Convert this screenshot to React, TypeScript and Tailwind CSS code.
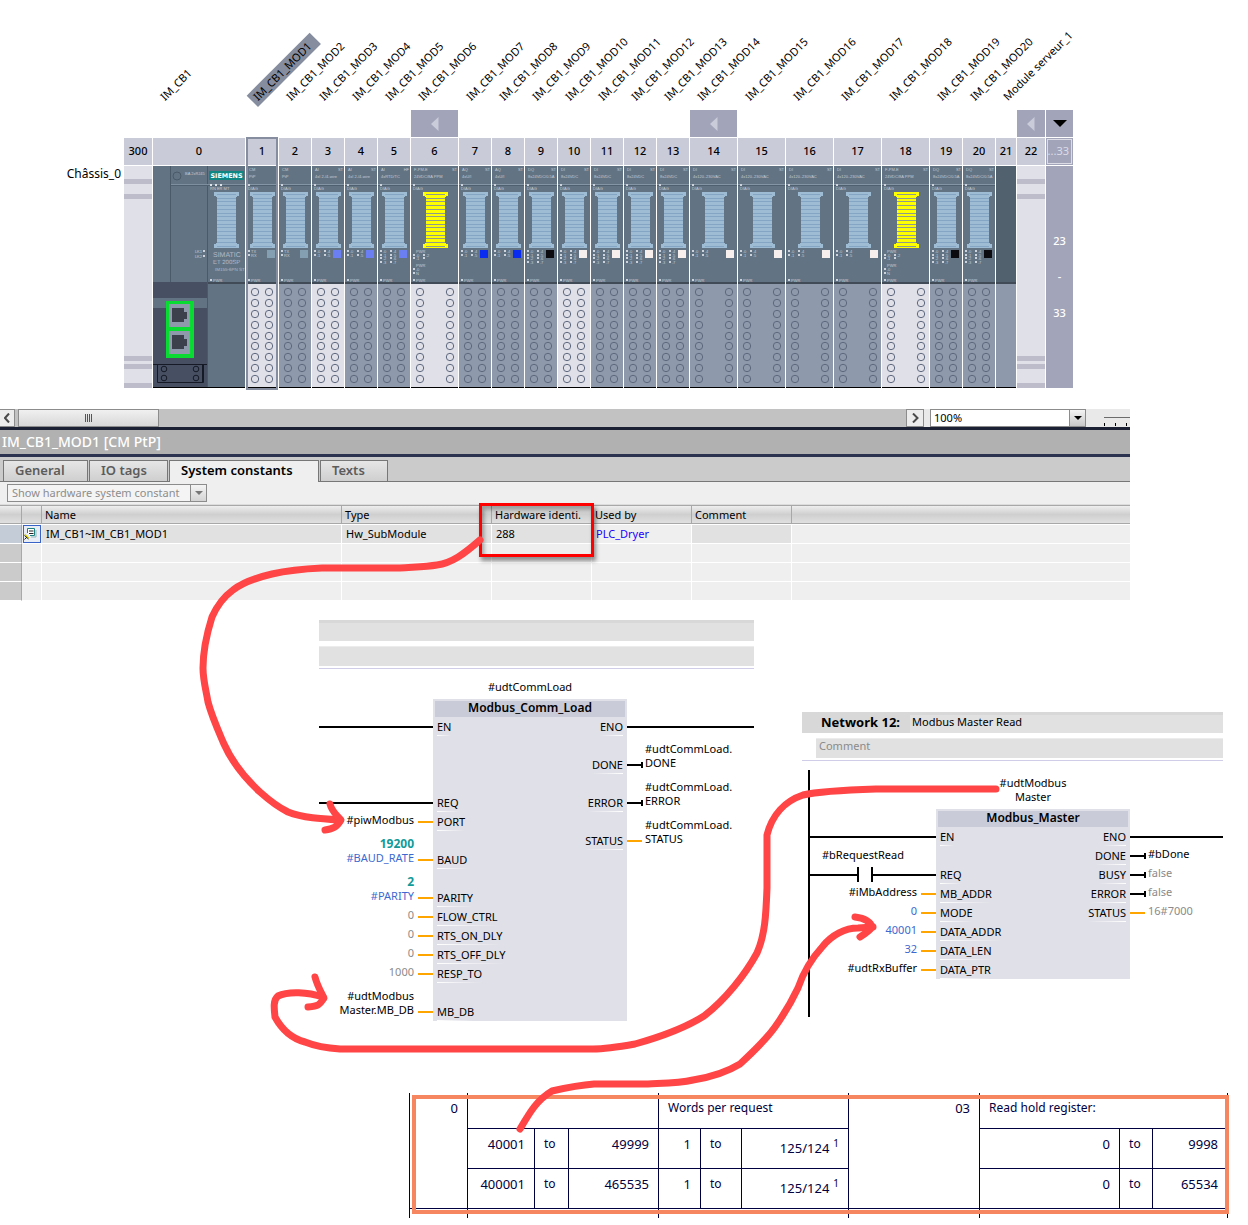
import React from "react";

type Slot = {
  no: string;
  label?: string;
  kind: "rail" | "head" | "module" | "server";
  wide?: boolean;
  light?: boolean;
  spool?: string;
  square?: string;
  leds?: "pair" | "quad" | "oct" | "power";
  family?: string;
  variant?: string;
  model?: string;
  arrow?: boolean;
  selected?: boolean;
};

const slots: Slot[] = [
  { no: "300", kind: "rail" },
  { no: "0", kind: "head", label: "IM_CB1" },
  { no: "1", kind: "module", label: "IM_CB1_MOD1", light: true, square: "#839fb1", leds: "pair", family: "CM", model: "PtP", selected: true },
  { no: "2", kind: "module", label: "IM_CB1_MOD2", square: "#839fb1", leds: "pair", family: "CM", model: "PtP" },
  { no: "3", kind: "module", label: "IM_CB1_MOD3", light: true, square: "#6c7ff2", leds: "quad", family: "AI", variant: "ST", model: "4xI 2-/4-wire" },
  { no: "4", kind: "module", label: "IM_CB1_MOD4", square: "#6c7ff2", leds: "quad", family: "AI", variant: "ST", model: "4xI 2-/4-wire" },
  { no: "5", kind: "module", label: "IM_CB1_MOD5", square: "#6c7ff2", leds: "oct", family: "AI", variant: "HF", model: "4xRTD/TC" },
  { no: "6", kind: "module", label: "IM_CB1_MOD6", wide: true, light: true, spool: "yellow", leds: "power", family: "F-PM-E", variant: "ST", model: "24VDC/8A PPM", arrow: true },
  { no: "7", kind: "module", label: "IM_CB1_MOD7", square: "#0a2cf0", leds: "quad", family: "AQ", variant: "ST", model: "4xU/I" },
  { no: "8", kind: "module", label: "IM_CB1_MOD8", square: "#0a2cf0", leds: "quad", family: "AQ", variant: "ST", model: "4xU/I" },
  { no: "9", kind: "module", label: "IM_CB1_MOD9", square: "#0c0c10", leds: "oct", family: "DQ", variant: "ST", model: "8x24VDC/0.5A" },
  { no: "10", kind: "module", label: "IM_CB1_MOD10", light: true, square: "#f7eeee", leds: "oct", family: "DI", variant: "ST", model: "8x24VDC" },
  { no: "11", kind: "module", label: "IM_CB1_MOD11", square: "#f7eeee", leds: "oct", family: "DI", variant: "ST", model: "8x24VDC" },
  { no: "12", kind: "module", label: "IM_CB1_MOD12", square: "#f7eeee", leds: "oct", family: "DI", variant: "ST", model: "8x24VDC" },
  { no: "13", kind: "module", label: "IM_CB1_MOD13", square: "#f7eeee", leds: "oct", family: "DI", variant: "ST", model: "8x24VDC" },
  { no: "14", kind: "module", label: "IM_CB1_MOD14", wide: true, square: "#f7eeee", leds: "quad", family: "DI", variant: "ST", model: "4x120..230VAC", arrow: true },
  { no: "15", kind: "module", label: "IM_CB1_MOD15", wide: true, square: "#f7eeee", leds: "quad", family: "DI", variant: "ST", model: "4x120..230VAC" },
  { no: "16", kind: "module", label: "IM_CB1_MOD16", wide: true, square: "#f7eeee", leds: "quad", family: "DI", variant: "ST", model: "4x120..230VAC" },
  { no: "17", kind: "module", label: "IM_CB1_MOD17", wide: true, square: "#f7eeee", leds: "quad", family: "DI", variant: "ST", model: "4x120..230VAC" },
  { no: "18", kind: "module", label: "IM_CB1_MOD18", wide: true, light: true, spool: "yellow", leds: "power", family: "F-PM-E", variant: "ST", model: "24VDC/8A PPM" },
  { no: "19", kind: "module", label: "IM_CB1_MOD19", square: "#0c0c10", leds: "oct", family: "DQ", variant: "ST", model: "8x24VDC/0.5A" },
  { no: "20", kind: "module", label: "IM_CB1_MOD20", square: "#0c0c10", leds: "oct", family: "DQ", variant: "ST", model: "8x24VDC/0.5A" },
  { no: "21", kind: "server", label: "Module serveur_1" },
  { no: "22", kind: "rail", arrow: true },
];

const BODY = "#627484";
const TERMINAL_ROWS = [126, 137, 148, 159, 170, 180, 191, 202, 213];

function Tiny({ x, y, children, end, size = 4 }: { x: number; y: number; children: React.ReactNode; end?: boolean; size?: number }) {
  return (
    <text x={x} y={y} fontSize={size} fill="#c3cad4" textAnchor={end ? "end" : "start"} fontFamily="Liberation Sans, sans-serif">
      {children}
    </text>
  );
}

function Spool({ x, yellow }: { x: number; yellow?: boolean }) {
  const fill = yellow ? "#ffff00" : "#9fbcd5";
  return (
    <g shapeRendering="crispEdges">
      <path
        fill={fill}
        d={`M${x} 26h25v4h-2v1h-1v46h1v1h2v4h-25v-4h2v-1h1v-46h-1v-1h-2z`}
      />
      {Array.from({ length: 15 }, (_, i) => (
        <rect key={i} x={x + 3} y={28 + Math.round(i * 3.7)} width={19} height={1} fill={yellow ? "#8f9c8c" : "#84a6c4"} />
      ))}
    </g>
  );
}

function Led({ x, y, text }: { x: number; y: number; text?: string }) {
  return (
    <g>
      <rect x={x} y={y} width={2} height={2} fill="#cdd3db" />
      {text && <Tiny x={x + 3} y={y + 3}>{text}</Tiny>}
    </g>
  );
}

function Leds({ kind }: { kind: Slot["leds"] }) {
  if (kind === "pair")
    return (
      <>
        <Led x={2} y={84} text="TX" />
        <Led x={2} y={88} text="RX" />
      </>
    );
  if (kind === "power")
    return (
      <>
        <Tiny x={5} y={87}>PWR</Tiny>
        {[88, 91].map((y, i) => (
          <g key={y}>
            <Led x={2} y={y} text={"." + i} />
            <Led x={12} y={y} text={i ? "" : ".2"} />
          </g>
        ))}
        <Tiny x={5} y={101}>PWR</Tiny>
        <Led x={2} y={102} text=".0" />
        <Led x={2} y={106} text="N" />
      </>
    );
  const rows = kind === "quad" ? [84, 88] : [84, 88, 91, 95];
  return (
    <>
      {rows.map((y, i) => (
        <g key={y}>
          <Led x={2} y={y} text={"." + i} />
          <Led x={12} y={y} text={"." + (i + 4)} />
        </g>
      ))}
    </>
  );
}

function ModuleBody({ slot }: { slot: Slot }) {
  const w = slot.wide ? 47 : 32;
  const right = slot.wide ? 39 : 23;
  return (
    <svg className="block" width={w} height={222} viewBox={`0 0 ${w} 222`} aria-hidden="true">
      <rect width={w} height={222} fill={BODY} />
      <rect y={18} width={w} height={1} fill="#8496a5" />
      <rect y={19} width={w} height={1} fill="#4f6070" />
      <Tiny x={3} y={5}>{slot.family}</Tiny>
      <Tiny x={w - 1} y={5} end>{slot.variant}</Tiny>
      <Tiny x={3} y={12}>{slot.model}</Tiny>
      <Led x={2} y={18} />
      <Tiny x={2} y={24}>DIAG</Tiny>
      <Spool x={slot.wide ? 12 : 4} yellow={slot.spool === "yellow"} />
      <Leds kind={slot.leds} />
      {slot.square && <rect x={slot.wide ? 36 : 21} y={84} width={8} height={8} fill={slot.square} />}
      <Led x={2} y={113} text="PWR" />
      <rect y={116} width={w} height={2} fill="#414b57" />
      <rect y={118} width={w} height={103} fill={slot.light ? "#e0e0e8" : "#8f99ac"} />
      <rect y={221} width={w} height={1} fill="#000" />
      {TERMINAL_ROWS.map((y) => (
        <g key={y} fill="none" stroke="#5d687d">
          <circle cx={9} cy={y} r={3.7} />
          <circle cx={right} cy={y} r={3.7} />
        </g>
      ))}
    </svg>
  );
}

function HeadBody() {
  return (
    <svg className="block" width={92} height={222} viewBox="0 0 92 222" aria-hidden="true">
      <rect width={92} height={222} fill={BODY} />
      <rect x={17} y={0} width={1} height={116} fill="#4b5a69" />
      <rect x={54} y={0} width={1} height={222} fill="#4b5a69" />
      <rect x={18} y={18} width={74} height={1} fill="#7e909f" />
      <rect x={18} y={19} width={74} height={1} fill="#4f6070" />
      <circle cx={24} cy={10} r={4} fill="none" stroke="#4b5a69" />
      <Tiny x={32} y={9}>BA 2xRJ45</Tiny>
      <rect x={56} y={5} width={35} height={9} fill="#108683" />
      <text x={73.5} y={12} fontSize={6.4} fontWeight={700} fill="#fff" textAnchor="middle" fontFamily="DejaVu Sans, sans-serif" textRendering="geometricPrecision">
        SIEMENS
      </text>
      {[57, 62, 67].map((x) => (
        <rect key={x} x={x} y={18} width={2} height={2} fill="#dfe3e8" />
      ))}
      <Tiny x={57} y={24}>RN ER MT</Tiny>
      <Spool x={61} />
      <g fontFamily="Liberation Sans, sans-serif" fill="#b3bac4" textRendering="geometricPrecision">
        <text x={60} y={91} fontSize={7}>SIMATIC</text>
        <text x={60} y={98} fontSize={6}>ET 200SP</text>
        <text x={62} y={105} fontSize={4.5}>IM155-6PN ST</text>
      </g>
      <Tiny x={49} y={87} end>LK1</Tiny>
      <Led x={50} y={84} />
      <Tiny x={49} y={92} end>LK2</Tiny>
      <Led x={50} y={89} />
      <Led x={57} y={113} text="PWR" />
      <rect x={55} y={116} width={37} height={2} fill="#414b57" />
      <rect x={0} y={116} width={54} height={106} fill="#465062" />
      <rect x={0} y={132} width={54} height={10} fill="#627484" />
      <rect x={13} y={135} width={28} height={57} fill="#0adb32" />
      {[138, 165].map((y) => (
        <g key={y}>
          <rect x={16} y={y} width={21} height={23} fill="#8f99ac" />
          <path d={`M19 ${y + 4}h12v4h3v7h-3v3h-12z`} fill="#3c404c" />
        </g>
      ))}
      <g fill="none" stroke="#151a26">
        <path d="M0 198.500H54M4.500 198v18.500H50.500V198M49.500 199v17" />
        {[203, 212].map((y) => (
          <g key={y}>
            <circle cx={11} cy={y} r={2.800} />
            <circle cx={43} cy={y} r={2.800} />
          </g>
        ))}
      </g>
      <rect y={221} width={92} height={1} fill="#000" />
    </svg>
  );
}

function RailBody() {
  return (
    <svg className="block" width={28} height={222} viewBox="0 0 28 222" aria-hidden="true">
      <rect width={28} height={222} fill="#e0e0e8" />
      {[13, 28, 190, 198, 217].map((y) => (
        <rect key={y} y={y} width={28} height={5} fill="#bcbccb" />
      ))}
    </svg>
  );
}

function ServerBody() {
  return (
    <svg className="block" width={20} height={222} viewBox="0 0 20 222" aria-hidden="true">
      <rect width={20} height={116} fill="#51616d" />
      <rect y={116} width={20} height={2} fill="#414b57" />
      <rect y={118} width={20} height={104} fill="#8f99ac" />
      <rect y={221} width={20} height={1} fill="#000" />
    </svg>
  );
}

function SlotColumn({ slot }: { slot: Slot }) {
  return (
    <div className="relative flex flex-none flex-col">
      <div className="h-[110px] w-0 pl-3">
        {slot.label && (
          <div className="flex h-[107px] w-0 items-end">
            <div
              className={
                slot.selected
                  ? "h-4 origin-bottom-left -rotate-45 bg-[#858d9f] pr-2 pl-1 text-[11px] leading-4 whitespace-nowrap"
                  : "h-4 origin-bottom-left -rotate-45 pr-2 pl-1 text-[11px] leading-4 whitespace-nowrap"
              }
            >
              {slot.label}
            </div>
          </div>
        )}
      </div>
      <div className="h-7">
        {slot.arrow && (
          <button type="button" aria-label={"Collapse slot " + slot.no} className="flex h-[27px] w-full items-center justify-center bg-[#a2a4b9]">
            <svg width="8" height="14" viewBox="0 0 8 14">
              <path d="M7.500 0v14L0 7z" fill="#caccda" />
            </svg>
          </button>
        )}
      </div>
      <div className="mb-px flex h-[27px] items-center justify-center bg-[#cacbd9] text-[11px] font-medium">{slot.no}</div>
      {slot.kind === "module" && <ModuleBody slot={slot} />}
      {slot.kind === "head" && <HeadBody />}
      {slot.kind === "rail" && <RailBody />}
      {slot.kind === "server" && <ServerBody />}
      {slot.selected && <div className="absolute inset-x-0 top-[137px] -bottom-0.5 border-2 border-[#858d9f]" />}
    </div>
  );
}

function Rack() {
  return (
    <section className="flex" aria-label="Rack">
      <div className="w-[124px] flex-none pt-[166px] pr-[3px] text-right text-[12px] leading-4">Châssis_0</div>
      <div className="flex gap-px">
        {slots.map((s) => (
          <SlotColumn key={s.no} slot={s} />
        ))}
        <div className="flex w-[27px] flex-none flex-col pt-[110px]">
          <button type="button" aria-label="More slots" className="mb-px flex h-[27px] items-center justify-center bg-[#a2a4b9]">
            <svg width="14" height="7" viewBox="0 0 14 7">
              <path d="M0 0h14L7 7z" fill="#000" />
            </svg>
          </button>
          <div className="mb-px h-[27px] bg-[#a2a4b9] p-px">
            <div className="flex h-full items-center justify-end border border-[#dcdce6] pr-0.5 text-[11px] text-[#dcdce6]">...33</div>
          </div>
          <div className="flex flex-1 flex-col items-center bg-[#a2a4b9] pt-[65px] text-[11px] leading-5 font-medium text-white">
            <span>23</span>
            <span className="my-4">-</span>
            <span>33</span>
          </div>
        </div>
      </div>
    </section>
  );
}

const tabs = [
  { name: "General", width: "w-[85px]" },
  { name: "IO tags", width: "w-[79px]" },
  { name: "System constants", width: "w-[150px]", active: true },
  { name: "Texts", width: "w-[68px]" },
];

function Properties() {
  const head = "border-r border-[#a8a8a8] pl-[3px] text-left font-normal";
  const cell = "border-r border-b border-white pl-1";
  return (
    <section className="mt-[21px] w-full max-w-[1130px] bg-[#efefef]" aria-label="Properties">
      <div className="flex h-[18px] bg-[#e9e9e9]">
        <div className="flex flex-1 items-stretch bg-[#c2c2c2]">
          <button type="button" aria-label="Scroll left" className="flex w-[15px] items-center justify-center border border-l-0 border-[#8c8c8c] bg-[#ececec]">
            <svg width="7" height="10" viewBox="0 0 7 10">
              <path d="M5 0.500 1 5 5 9.500" fill="none" stroke="#4a4a4a" strokeWidth="2" />
            </svg>
          </button>
          <div className="ml-[3px] flex w-[141px] items-center justify-center gap-px border border-[#8c8c8c] bg-linear-to-b from-[#f0f0f0] to-[#d8d8d8]">
            {[0, 1, 2, 3].map((i) => (
              <span key={i} className="h-2 w-px bg-[#555555]" />
            ))}
          </div>
        </div>
        <button type="button" aria-label="Scroll right" className="flex w-[18px] items-center justify-center border border-[#8c8c8c] bg-[#ececec]">
          <svg width="7" height="10" viewBox="0 0 7 10">
            <path d="M1 0.500 5.500 5 1 9.500" fill="none" stroke="#4a4a4a" strokeWidth="2" />
          </svg>
        </button>
        <div className="relative ml-1.5 w-[156px]">
          <select aria-label="Zoom" className="block h-[18px] w-full appearance-none border border-[#8c8c8c] bg-white pr-4 pl-[3px] text-[11px] leading-4">
            <option>100%</option>
          </select>
          <div className="pointer-events-none absolute inset-y-0 right-0 flex w-[17px] items-center justify-center border border-[#8c8c8c] bg-linear-to-b from-[#f4f4f4] to-[#c8c8c8]">
            <svg width="8" height="4" viewBox="0 0 8 4">
              <path d="M0 0h8L4 4z" fill="#000" />
            </svg>
          </div>
        </div>
        <svg className="ml-[18px] block" width="26" height="18" viewBox="0 0 26 18" aria-hidden="true">
          <path d="M0 8.500H26" stroke="#6b6b6b" />
          <path d="M.5 14v3M11.500 14v3M22.500 14v3" stroke="#000" />
        </svg>
      </div>
      <h2 className="h-[30px] border-y-3 border-t-[#1c2133] border-b-[#2c3350] bg-[#b1b1b1] pl-0.5 text-[14px] leading-6 font-medium text-white">
        IM_CB1_MOD1 [CM PtP]
      </h2>
      <div role="tablist" className="flex h-[25px] items-end gap-px border-b border-[#777777] bg-[#cbcbcb] pl-[3px]">
        {tabs.map((t) => (
          <button
            key={t.name}
            type="button"
            role="tab"
            aria-selected={!!t.active}
            className={
              t.width +
              (t.active
                ? " -mb-px h-[22px] border border-b-0 border-[#777777] bg-[#efefef] pb-1 pl-[11px] text-left text-[13px] leading-4 font-semibold text-black"
                : " h-[21px] border border-b-0 border-[#777777] bg-linear-to-b from-[#e6e6e6] to-[#cfcfcf] pb-0.5 pl-[11px] text-left text-[13px] leading-4 font-semibold text-[#5c5c5c]")
            }
          >
            {t.name}
          </button>
        ))}
      </div>
      <div className="h-[23px] border-b border-[#dcdcdc] pt-0.5 pl-[7px]">
        <div className="relative w-[200px]">
          <select aria-label="Constant filter" className="block h-[18px] w-full appearance-none overflow-hidden border border-[#8c8c8c] bg-[#f4f4f4] pr-4 pl-1 text-[11px] leading-4 text-[#8d8d8d]">
            <option>Show hardware system constant</option>
          </select>
          <div className="pointer-events-none absolute inset-y-0 right-0 flex w-[17px] items-center justify-center border border-[#8c8c8c] bg-linear-to-b from-[#f4f4f4] to-[#d4d4d4]">
            <svg width="8" height="4" viewBox="0 0 8 4">
              <path d="M0 0h8L4 4z" fill="#777" />
            </svg>
          </div>
        </div>
      </div>
      <table className="w-full table-fixed border-separate border-spacing-0 text-[11px] leading-4">
        <colgroup>
          <col className="w-[22px]" />
          <col className="w-[20px]" />
          <col className="w-[300px]" />
          <col className="w-[150px]" />
          <col className="w-[100px]" />
          <col className="w-[100px]" />
          <col className="w-[100px]" />
          <col />
        </colgroup>
        <thead>
          <tr className="h-[19px] [&>th]:border-y [&>th]:border-y-[#a8a8a8] [&>th]:bg-linear-to-b [&>th]:from-[#eeeeee] [&>th]:via-[#cfcfcf] [&>th]:to-[#e0e0e0]">
            <th className={head} aria-label="Row" />
            <th className={head} aria-label="Kind" />
            <th className={head}>Name</th>
            <th className={head}>Type</th>
            <th className={head + " whitespace-nowrap"}>Hardware identi.</th>
            <th className={head}>Used by</th>
            <th className={head}>Comment</th>
            <th aria-label="Filler" />
          </tr>
        </thead>
        <tbody>
          <tr className="h-5">
            <td className="border-y border-r border-white border-r-[#a8a8a8] bg-[#c3ccd7]" />
            <td className="border-y border-white">
              <svg className="block" width="19" height="18" viewBox="0 0 19 18" aria-hidden="true">
                <rect x="1.500" y=".5" width="17" height="17" fill="#e8ecf4" stroke="#3a63c8" />
                <path d="M5.500 8V3.500h7v7H8" fill="#fff" stroke="#1f8080" />
                <path d="M14 5v7H9" fill="none" stroke="#8fb8b8" />
                <path d="M7 6h4.500M7 8.500h4.500" stroke="#222" />
                <path d="M3 9l4 4-3-.5z" fill="#e5d800" stroke="#e5d800" />
                <path d="M2.500 10.500l4 3.500M2.500 14.500l2.500-2.500" stroke="#222" />
              </svg>
            </td>
            <td className={cell + " border-t bg-[#e1e1e1]"}>IM_CB1~IM_CB1_MOD1</td>
            <td className={cell + " border-t bg-[#e1e1e1]"}>Hw_SubModule</td>
            <td className={cell + " border-t bg-[#e1e1e1]"}>288</td>
            <td className={cell + " border-t"}>
              <a href="#plc" className="text-[#1a00ff]">PLC_Dryer</a>
            </td>
            <td className={cell + " border-t bg-[#e1e1e1]"} />
            <td className="border-y border-white" />
          </tr>
          {[0, 1, 2].map((r) => (
            <tr key={r} className="h-[19px]">
              <td className="border-r border-b border-white border-r-[#a8a8a8] bg-[#cbcbcb]" />
              <td className={cell} />
              <td className={cell} />
              <td className={cell} />
              <td className={cell} />
              <td className={cell} />
              <td className={cell} />
              <td className="border-b border-white" />
            </tr>
          ))}
        </tbody>
      </table>
    </section>
  );
}

type Side = { name: string; wire: "power" | "data" | "coil" | "contact"; lines?: { text: string; tone?: string }[] };
type Row = { left?: Side; right?: Side };

const teal = "text-[12px] font-bold text-[#109a98]";
const blue = "text-[#3b69cf]";
const gray = "text-[#8a8a8a]";

const loadRows: Row[] = [
  { left: { name: "EN", wire: "power" }, right: { name: "ENO", wire: "power" } },
  {},
  { right: { name: "DONE", wire: "coil", lines: [{ text: "#udtCommLoad." }, { text: "DONE" }] } },
  {},
  { left: { name: "REQ", wire: "power" }, right: { name: "ERROR", wire: "coil", lines: [{ text: "#udtCommLoad." }, { text: "ERROR" }] } },
  { left: { name: "PORT", wire: "data", lines: [{ text: "#piwModbus" }] } },
  { right: { name: "STATUS", wire: "data", lines: [{ text: "#udtCommLoad." }, { text: "STATUS" }] } },
  { left: { name: "BAUD", wire: "data", lines: [{ text: "19200", tone: teal }, { text: "#BAUD_RATE", tone: blue }] } },
  {},
  { left: { name: "PARITY", wire: "data", lines: [{ text: "2", tone: teal }, { text: "#PARITY", tone: blue }] } },
  { left: { name: "FLOW_CTRL", wire: "data", lines: [{ text: "0", tone: gray }] } },
  { left: { name: "RTS_ON_DLY", wire: "data", lines: [{ text: "0", tone: gray }] } },
  { left: { name: "RTS_OFF_DLY", wire: "data", lines: [{ text: "0", tone: gray }] } },
  { left: { name: "RESP_TO", wire: "data", lines: [{ text: "1000", tone: gray }] } },
  {},
  { left: { name: "MB_DB", wire: "data", lines: [{ text: "#udtModbus" }, { text: "Master.MB_DB" }] } },
];

const masterRows: Row[] = [
  { left: { name: "EN", wire: "power" }, right: { name: "ENO", wire: "power" } },
  { right: { name: "DONE", wire: "coil", lines: [{ text: "#bDone" }] } },
  { left: { name: "REQ", wire: "contact", lines: [{ text: "#bRequestRead" }] }, right: { name: "BUSY", wire: "coil", lines: [{ text: "false", tone: gray }] } },
  { left: { name: "MB_ADDR", wire: "data", lines: [{ text: "#iMbAddress" }] }, right: { name: "ERROR", wire: "coil", lines: [{ text: "false", tone: gray }] } },
  { left: { name: "MODE", wire: "data", lines: [{ text: "0", tone: blue }] }, right: { name: "STATUS", wire: "data", lines: [{ text: "16#7000", tone: gray }] } },
  { left: { name: "DATA_ADDR", wire: "data", lines: [{ text: "40001", tone: blue }] } },
  { left: { name: "DATA_LEN", wire: "data", lines: [{ text: "32", tone: blue }] } },
  { left: { name: "DATA_PTR", wire: "data", lines: [{ text: "#udtRxBuffer" }] } },
];

function Lines({ side, align }: { side: Side; align: string }) {
  return (
    <div className={"flex h-[19px] flex-col justify-end pb-1 leading-[14px] whitespace-nowrap " + align}>
      {side.lines?.map((l) => (
        <span key={l.text} className={l.tone}>{l.text}</span>
      ))}
    </div>
  );
}

function LeftSide({ side }: { side?: Side }) {
  if (!side) return null;
  if (side.wire === "power") return <div className="h-0.5 w-full bg-black" />;
  if (side.wire === "contact")
    return (
      <div className="relative flex w-full items-center">
        <div className="h-0.5 w-[47px] bg-black" />
        <div className="mr-3 h-[15px] w-0.5 bg-black" />
        <div className="h-[15px] w-0.5 bg-black" />
        <div className="h-0.5 flex-1 bg-black" />
        <span className="absolute bottom-5 left-3 leading-[14px]">{side.lines?.[0].text}</span>
      </div>
    );
  return (
    <>
      <Lines side={side} align="items-end mr-1" />
      <div className="h-0.5 w-[15px] bg-[#ffa500]" />
    </>
  );
}

function RightSide({ side }: { side?: Side }) {
  if (!side) return null;
  if (side.wire === "power") return <div className="h-0.5 w-full bg-black" />;
  return (
    <>
      {side.wire === "coil" ? (
        <div className="flex items-center">
          <div className="h-0.5 w-3.5 bg-black" />
          <div className="h-1.5 w-0.5 bg-black" />
        </div>
      ) : (
        <div className="mr-px h-0.5 w-[15px] bg-[#ffa500]" />
      )}
      <Lines side={side} align="items-start ml-0.5" />
    </>
  );
}

function Block({ title, instance, rows, leftWidth }: { title: string; instance: string[]; rows: Row[]; leftWidth: string }) {
  return (
    <div className="text-[11px]">
      <div className="flex">
        <div className={"flex-none " + leftWidth} />
        <div className="w-[194px] flex-none">
          <div className="pb-[5px] text-center leading-[14px]">
            {instance.map((l) => (
              <div key={l}>{l}</div>
            ))}
          </div>
          <div className="h-[18px] border-2 border-b-0 border-[#e0e0e8] bg-[#cacbd9] text-center text-[12px] leading-[14px] font-semibold">{title}</div>
        </div>
      </div>
      {rows.map((row, i) => (
        <div key={i} className="flex h-[19px]">
          <div className={"flex flex-none items-center justify-end " + leftWidth}>
            <LeftSide side={row.left} />
          </div>
          <div className="flex w-[194px] flex-none justify-between bg-[#e0e0e8] px-1 pt-0.5 leading-4">
            <div>
              {row.left?.name}
              {row.left && <div className="h-px w-full bg-linear-to-r from-white to-transparent" />}
            </div>
            <div>
              {row.right?.name}
              {row.right && <div className="h-px w-full bg-linear-to-l from-white to-transparent" />}
            </div>
          </div>
          <div className="flex flex-1 items-center">
            <RightSide side={row.right} />
          </div>
        </div>
      ))}
    </div>
  );
}

function Networks() {
  return (
    <section className="mt-[19px] mr-[25px] ml-[319px] grid grid-cols-[435fr_421fr] gap-12">
      <div>
        <div className="h-[21px] border-t-3 border-[#d8d8d8] bg-[#e1e1e1]" />
        <div className="mt-[5px] h-5 border-t border-[#ececec] bg-[#e1e1e1]" />
        <div className="mt-0.5 mb-[11px] h-px bg-[#cfcde8]" />
        <Block title="Modbus_Comm_Load" instance={["#udtCommLoad"]} rows={loadRows} leftWidth="w-[114px]" />
      </div>
      <div className="mt-[92px]">
        <div className="flex h-[21px] bg-[#d8d8d8] text-[11px] leading-5">
          <h3 className="w-[108px] pl-[19px] text-[13px] font-bold whitespace-nowrap">Network 12:</h3>
          <div className="flex-1 border-t-3 border-[#d8d8d8] bg-[#e1e1e1] pl-0.5 leading-[14px]">Modbus Master Read</div>
        </div>
        <div className="mt-[5px] ml-3.5 h-5 border-t border-[#ececec] bg-[#e1e1e1] pl-[3px] text-[11px] leading-[14px] text-[#8a8a8a]">Comment</div>
        <div className="mt-0.5 h-px bg-[#cfcde8]" />
        <div className="mt-[9px] ml-1.5 h-[247px] border-l-2 border-black pt-1.5">
          <Block title="Modbus_Master" instance={["#udtModbus", "Master"]} rows={masterRows} leftWidth="w-[126px]" />
        </div>
      </div>
    </section>
  );
}

function Registers() {
  const line = "border-l border-[#000040] ";
  const num = line + "border-t pr-[9px] pt-1.5 text-right text-[13px]";
  const to = line + "border-t pt-1.5 pl-[9px]";
  return (
    <section className="relative mt-[72px] mr-5 ml-[409px]">
      <table className="w-full table-fixed border-separate border-spacing-0 text-[12px] leading-[18px] text-[#000040] [&_td]:align-top">
        <colgroup>
          <col className="w-[58px]" />
          <col className="w-[67px]" />
          <col className="w-[34px]" />
          <col className="w-[90px]" />
          <col className="w-[42px]" />
          <col className="w-[41px]" />
          <col className="w-[107px]" />
          <col className="w-[131px]" />
          <col className="w-[140px]" />
          <col className="w-[33px]" />
          <col className="w-[76px]" />
        </colgroup>
        <tbody>
          <tr className="h-[35px]">
            <td rowSpan={3} className={line + "pt-1.5 pr-[9px] text-right text-[13px]"}>0</td>
            <td colSpan={3} className={line} />
            <td colSpan={3} className={line + "pt-1.5 pl-[9px]"}>Words per request</td>
            <td rowSpan={3} className={line + "pt-1.5 pr-[9px] text-right text-[13px]"}>03</td>
            <td colSpan={3} className={line + "border-r pt-1.5 pl-[9px]"}>Read hold register:</td>
          </tr>
          {[
            ["40001", "49999", "9998"],
            ["400001", "465535", "65534"],
          ].map(([from, until, last]) => (
            <tr key={from} className="h-10">
              <td className={num}>{from}</td>
              <td className={to}>to</td>
              <td className={num}>{until}</td>
              <td className={num}>1</td>
              <td className={to}>to</td>
              <td className={num}>
                <div className="flex items-start justify-end gap-1">
                  <span className="pt-1">125/124</span>
                  <span className="text-[10px] leading-4">1</span>
                </div>
              </td>
              <td className={num}>0</td>
              <td className={to}>to</td>
              <td className={num + " border-r"}>{last}</td>
            </tr>
          ))}
          <tr className="h-2.5">
            <td className={line + "border-t"} />
            <td colSpan={3} className={line + "border-t"} />
            <td colSpan={3} className={line + "border-t"} />
            <td className={line + "border-t"} />
            <td colSpan={3} className={line + "border-t border-r"} />
          </tr>
        </tbody>
      </table>
      <div className="absolute top-0.5 -right-px bottom-1 left-[3px] border-4 border-[#f68660]" />
    </section>
  );
}

function Annotations() {
  return (
    <>
      <div className="pointer-events-none absolute top-[503px] left-[479px] h-[54px] w-[115px] border-3 border-[#ff0000] shadow-[2px_4px_4px_rgba(0,0,0,0.4),inset_2px_4px_4px_rgba(0,0,0,0.35)]" />
      <svg className="pointer-events-none absolute top-0 left-0" width="1248" height="1225" viewBox="0 0 1248 1225" aria-hidden="true">
        <g fill="none" stroke="#ff4545" strokeWidth="7" strokeLinecap="round" strokeLinejoin="round">
          <path d="M480 540C464 554 452 563 437 565C425 567 412 567 400 568H322C300 569 285 571 272 574C255 578 242 583 233 590C222 598 216 608 212 617C207 633 203 650 203 668C203 680 206 690 208 702C212 717 218 730 224 744C232 762 246 779 260 792C270 801 278 807 288 812C303 818 322 819 340 820" />
          <path d="M330 804C332 812 336 814 341 820C337 827 333 829 325 830" />
          <path d="M996 789H876C845 790 820 791 803 795C785 801 772 815 767 835V888C766 915 765 935 757 953C745 975 725 1000 704 1016C685 1028 660 1037 635 1044C618 1047 605 1049 593 1049H340C325 1048 315 1046 305 1042C290 1038 281 1028 275 1017C274 1008 273 1000 278 996C288 991 308 992 323 997" />
          <path d="M315 977C317 985 320 990 324 998C320 1004 320 1006 308 1007" />
          <path d="M520 1129C530 1112 537 1100 552 1091C565 1088 580 1085 594 1084H648C670 1083 680 1083 693 1080C712 1077 727 1072 740 1064C752 1053 765 1041 775 1027C785 1013 790 1005 798 988C803 973 812 958 823 946C832 935 845 928 858 928L873 927" />
          <path d="M855 917C863 918 870 920 872 927C870 930 868 932 860 937" />
        </g>
      </svg>
    </>
  );
}

export default function App() {
  return (
    <main className="relative min-h-[1225px] overflow-hidden bg-white font-['Noto_Sans','Open_Sans',sans-serif] text-black">
      <Rack />
      <Properties />
      <Networks />
      <Registers />
      <Annotations />
    </main>
  );
}
